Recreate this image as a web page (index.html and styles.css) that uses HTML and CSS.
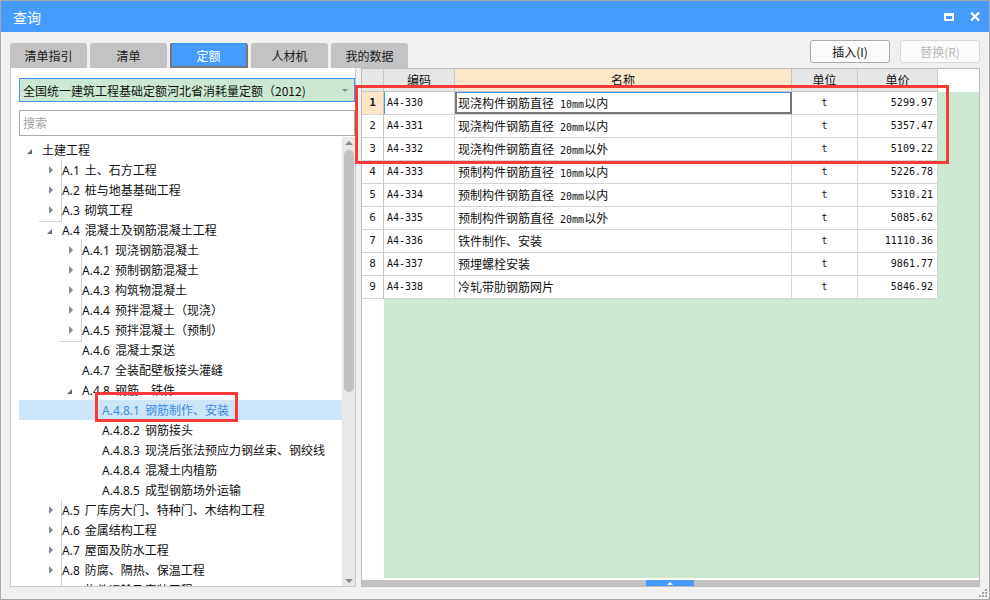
FILE: index.html
```html
<!DOCTYPE html>
<html lang="zh-CN">
<head>
<meta charset="utf-8">
<title>查询</title>
<link rel="stylesheet" href="styles.css">
</head>
<body>
<div class="window">
  <div class="titlebar">
    <span class="title">查询</span>
    <span class="tb-max"></span>
    <svg class="tb-close" width="10" height="9" viewBox="0 0 10 9"><path d="M1 0.5 L9 8.5 M9 0.5 L1 8.5" stroke="#fff" stroke-width="2.2" fill="none"/></svg>
  </div>

  <div class="toolbar">
    <div class="tabs">
      <div class="tab">清单指引</div>
      <div class="tab">清单</div>
      <div class="tab active">定额</div>
      <div class="tab">人材机</div>
      <div class="tab">我的数据</div>
    </div>
    <div class="btns">
      <div class="btn">插入(I)</div>
      <div class="btn disabled">替换(R)</div>
    </div>
  </div>

  <div class="main">
    <div class="left">
      <div class="dropdown"><span>全国统一建筑工程基础定额河北省消耗量定额（2012)</span><span class="dd-arrow"></span></div>
      <div class="search">搜索</div>
      <div class="treewrap">
        <div class="tree">
          <div class="row l0"><span class="tg e"></span>土建工程</div>
          <div class="row l1"><span class="tg c"></span>A.1 土、石方工程</div>
          <div class="row l1"><span class="tg c"></span>A.2 桩与地基基础工程</div>
          <div class="row l1"><span class="tg c"></span>A.3 砌筑工程</div>
          <div class="row l1"><span class="tg e"></span>A.4 混凝土及钢筋混凝土工程</div>
          <div class="row l2"><span class="tg c"></span>A.4.1 现浇钢筋混凝土</div>
          <div class="row l2"><span class="tg c"></span>A.4.2 预制钢筋混凝土</div>
          <div class="row l2"><span class="tg c"></span>A.4.3 构筑物混凝土</div>
          <div class="row l2"><span class="tg c"></span>A.4.4 预拌混凝土（现浇）</div>
          <div class="row l2"><span class="tg c"></span>A.4.5 预拌混凝土（预制）</div>
          <div class="row l2"><span class="tg"></span>A.4.6 混凝土泵送</div>
          <div class="row l2"><span class="tg"></span>A.4.7 全装配壁板接头灌缝</div>
          <div class="row l2"><span class="tg e"></span>A.4.8 钢筋、铁件</div>
          <div class="row l3 sel"><span class="tg"></span>A.4.8.1 钢筋制作、安装</div>
          <div class="row l3"><span class="tg"></span>A.4.8.2 钢筋接头</div>
          <div class="row l3"><span class="tg"></span>A.4.8.3 现浇后张法预应力钢丝束、钢绞线</div>
          <div class="row l3"><span class="tg"></span>A.4.8.4 混凝土内植筋</div>
          <div class="row l3"><span class="tg"></span>A.4.8.5 成型钢筋场外运输</div>
          <div class="row l1"><span class="tg c"></span>A.5 厂库房大门、特种门、木结构工程</div>
          <div class="row l1"><span class="tg c"></span>A.6 金属结构工程</div>
          <div class="row l1"><span class="tg c"></span>A.7 屋面及防水工程</div>
          <div class="row l1"><span class="tg c"></span>A.8 防腐、隔热、保温工程</div>
          <div class="row l1"><span class="tg c"></span>A.9 构件运输及安装工程</div>
        </div>
        <div class="vscroll">
          <span class="arr-up"></span>
          <span class="thumb"></span>
          <span class="vspace"></span>
          <span class="arr-down"></span>
        </div>
      </div>
    </div>

    <div class="grid">
      <div class="ghead">
        <div class="hc w-rn"><div class="ht"></div></div>
        <div class="hc w-code"><div class="ht">编码</div></div>
        <div class="hc w-name hl"><div class="ht">名称</div></div>
        <div class="hc w-unit"><div class="ht">单位</div></div>
        <div class="hc w-price"><div class="ht">单价</div></div>
        <div class="hrest"></div>
      </div>
      <div class="gbody">
        <div class="rncol">
          <div class="rn cur">1</div>
          <div class="rn">2</div>
          <div class="rn">3</div>
          <div class="rn">4</div>
          <div class="rn">5</div>
          <div class="rn">6</div>
          <div class="rn">7</div>
          <div class="rn">8</div>
          <div class="rn">9</div>
        </div>
        <div class="gmain">
          <div class="gr">
            <div class="c w-code m focus-l">A4-330</div>
            <div class="c w-name active">现浇构件钢筋直径<span class="m"> 10mm</span>以内</div>
            <div class="c w-unit m ctr">t</div>
            <div class="c w-price m num">5299.97</div>
          </div>
          <div class="gr">
            <div class="c w-code m">A4-331</div>
            <div class="c w-name">现浇构件钢筋直径<span class="m"> 20mm</span>以内</div>
            <div class="c w-unit m ctr">t</div>
            <div class="c w-price m num">5357.47</div>
          </div>
          <div class="gr">
            <div class="c w-code m">A4-332</div>
            <div class="c w-name">现浇构件钢筋直径<span class="m"> 20mm</span>以外</div>
            <div class="c w-unit m ctr">t</div>
            <div class="c w-price m num">5109.22</div>
          </div>
          <div class="gr">
            <div class="c w-code m">A4-333</div>
            <div class="c w-name">预制构件钢筋直径<span class="m"> 10mm</span>以内</div>
            <div class="c w-unit m ctr">t</div>
            <div class="c w-price m num">5226.78</div>
          </div>
          <div class="gr">
            <div class="c w-code m">A4-334</div>
            <div class="c w-name">预制构件钢筋直径<span class="m"> 20mm</span>以内</div>
            <div class="c w-unit m ctr">t</div>
            <div class="c w-price m num">5310.21</div>
          </div>
          <div class="gr">
            <div class="c w-code m">A4-335</div>
            <div class="c w-name">预制构件钢筋直径<span class="m"> 20mm</span>以外</div>
            <div class="c w-unit m ctr">t</div>
            <div class="c w-price m num">5085.62</div>
          </div>
          <div class="gr">
            <div class="c w-code m">A4-336</div>
            <div class="c w-name">铁件制作、安装</div>
            <div class="c w-unit m ctr">t</div>
            <div class="c w-price m num">11110.36</div>
          </div>
          <div class="gr">
            <div class="c w-code m">A4-337</div>
            <div class="c w-name">预埋螺栓安装</div>
            <div class="c w-unit m ctr">t</div>
            <div class="c w-price m num">9861.77</div>
          </div>
          <div class="gr">
            <div class="c w-code m">A4-338</div>
            <div class="c w-name">冷轧带肋钢筋网片</div>
            <div class="c w-unit m ctr">t</div>
            <div class="c w-price m num">5846.92</div>
          </div>
        </div>
      </div>
      <div class="hscroll-wrap">
        <div class="hscroll"><span class="hthumb"><span class="hthumb-arr"></span></span></div>
      </div>
    </div>
  </div>

  <div class="mark mark-tree"></div>
  <div class="mark mark-table"></div>
  <svg class="grip" width="10" height="10" viewBox="0 0 10 10">
    <rect x="7" y="1" width="2" height="2" fill="#a6a6a6"/>
    <rect x="4" y="4" width="2" height="2" fill="#a6a6a6"/>
    <rect x="7" y="4" width="2" height="2" fill="#a6a6a6"/>
    <rect x="1" y="7" width="2" height="2" fill="#a6a6a6"/>
    <rect x="4" y="7" width="2" height="2" fill="#a6a6a6"/>
    <rect x="7" y="7" width="2" height="2" fill="#a6a6a6"/>
  </svg>
</div>
</body>
</html>
```

FILE: styles.css
```css
html, body {
  margin: 0;
  padding: 0;
  background: #ffffff;
}

.window {
  position: relative;
  width: 990px;
  height: 600px;
  box-sizing: border-box;
  border: 1px solid #a8a8a8;
  background: #f0f0f0;
  display: flex;
  flex-direction: column;
  font-family: "Noto Sans CJK SC", "Noto Sans", sans-serif;
  color: #111;
  overflow: hidden;
}

/* title bar */
.titlebar {
  height: 31px;
  flex: none;
  background: #459bff;
  display: flex;
  align-items: center;
  padding: 0 9px 0 12px;
  color: #fff;
  font-size: 14px;
}
.title { flex: 1; }
.tb-max {
  width: 10px;
  height: 8px;
  box-sizing: border-box;
  border: 2px solid #fff;
  border-top-width: 3px;
  margin-right: 16px;
}
.tb-close { display: block; }

/* toolbar: tabs + buttons */
.toolbar {
  display: flex;
  height: 28px;
  flex: none;
  margin-top: 8px;
  padding: 0 9px;
}
.tabs {
  display: flex;
  gap: 3px;
  align-self: flex-end;
}
.tab {
  width: 77px;
  height: 25px;
  line-height: 25px;
  text-align: center;
  background: #c3c3c3;
  border-radius: 3px 3px 0 0;
  font-size: 12px;
  color: #1a1a1a;
}
.tab.active {
  background: #459bff;
  color: #fff;
}
.btns {
  margin-left: auto;
  display: flex;
  gap: 10px;
  align-self: flex-start;
}
.btn {
  width: 80px;
  height: 23px;
  box-sizing: border-box;
  border: 1px solid #acacac;
  border-radius: 3px;
  background: #fbfbfb;
  font-size: 12px;
  line-height: 21px;
  text-align: center;
  color: #111;
}
.btn.disabled {
  color: #b8b8b8;
  border-color: #dadada;
}

/* main area */
.main {
  display: flex;
  gap: 5px;
  padding: 0 9px;
  height: 519px;
  flex: none;
}

.left {
  width: 346px;
  flex: none;
  box-sizing: border-box;
  border: 1px solid #c9c9c9;
  border-top-color: #ffffff;
  background: #fff;
  padding: 9px 0 0 8px;
  display: flex;
  flex-direction: column;
}
.dropdown {
  height: 24px;
  flex: none;
  box-sizing: border-box;
  border: 1px solid #3d94ff;
  background: #cde8d2;
  display: flex;
  align-items: center;
  padding: 0 6px 0 3px;
  font-size: 12px;
  color: #111;
  white-space: nowrap;
}
.dd-arrow {
  margin-left: auto;
  width: 0;
  height: 0;
  border-top: 3px solid #8a8a8a;
  border-left: 3px solid transparent;
  border-right: 3px solid transparent;
}
.search {
  margin-top: 8px;
  height: 26px;
  flex: none;
  box-sizing: border-box;
  border: 1px solid #a9a9a9;
  font-size: 12px;
  color: #a3a3a3;
  padding-left: 3px;
  line-height: 24px;
}
.treewrap {
  margin-top: 1px;
  flex: 1;
  display: flex;
  min-height: 0;
}
.tree {
  flex: 1;
  overflow: hidden;
  padding-top: 3px;
}
.row {
  height: 20px;
  display: flex;
  align-items: center;
  font-family: "Noto Sans", "Noto Sans CJK SC", sans-serif;
  font-size: 12px;
  word-spacing: 2px;
  white-space: pre;
  color: #111;
}
.row.l1 { padding-left: 20px; }
.row.l2 { padding-left: 40px; }
.row.l3 { padding-left: 60px; }
.row.sel {
  background: #cce5f9;
  color: #3a8ee6;
}
.tg {
  width: 23px;
  height: 20px;
  flex: none;
  display: flex;
  align-items: center;
}
.tg.c::before {
  content: "";
  margin-left: 7px;
  width: 0;
  height: 0;
  border-left: 4px solid #8a8a8a;
  border-top: 4px solid transparent;
  border-bottom: 4px solid transparent;
}
.tg.e::before {
  content: "";
  margin-left: 8px;
  margin-top: 2px;
  width: 0;
  height: 0;
  border-right: 5px solid #6a6a6a;
  border-top: 5px solid transparent;
}

.vscroll {
  width: 13px;
  flex: none;
  background: #e8e8e8;
  display: flex;
  flex-direction: column;
  align-items: center;
}
.arr-up {
  margin-top: 4px;
  width: 0;
  height: 0;
  border-bottom: 4px solid #8a8a8a;
  border-left: 4px solid transparent;
  border-right: 4px solid transparent;
}
.thumb {
  margin-top: 5px;
  width: 10px;
  height: 242px;
  border-radius: 5px;
  background: #c1c1c1;
}
.vspace { flex: 1; }
.arr-down {
  margin-bottom: 3px;
  width: 0;
  height: 0;
  border-top: 4px solid #8a8a8a;
  border-left: 4px solid transparent;
  border-right: 4px solid transparent;
}

/* right grid */
.grid {
  flex: 1;
  min-width: 0;
  box-sizing: border-box;
  border: 1px solid #bcbcbc;
  background: #fff;
  display: flex;
  flex-direction: column;
}
.ghead {
  display: flex;
  height: 23px;
  flex: none;
}
.hc {
  box-sizing: border-box;
  height: 23px;
  border-right: 1px solid #c6c6c6;
  border-bottom: 1px solid #c6c6c6;
  background: #e6e6e6;
  overflow: hidden;
  font-size: 12px;
  text-align: center;
  color: #111;
  flex: none;
}
.hc.hl { background: #fde7c9; }
.ht {
  height: 17px;
  overflow: hidden;
  line-height: 22px;
  border-bottom: 1px solid #d2d2d2;
}
.hrest {
  flex: 1;
  background: #fff;
}
.w-rn { width: 22px; }
.w-code { width: 71px; }
.w-name { width: 337px; }
.w-unit { width: 66px; }
.w-price { width: 80px; }

.gbody {
  flex: 1;
  display: flex;
  min-height: 0;
}
.rncol {
  width: 22px;
  flex: none;
  background: #fff;
}
.rn {
  height: 23px;
  box-sizing: border-box;
  border-right: 1px solid #c6c6c6;
  border-bottom: 1px solid #d4d4d4;
  text-align: center;
  font-family: "DejaVu Sans Mono", monospace;
  font-size: 11px;
  line-height: 22px;
  color: #222;
}
.rn.cur {
  background: #fde5c6;
  font-weight: bold;
  color: #111;
}
.gmain {
  flex: 1;
  background: #cde8d1;
}
.gr {
  display: flex;
  width: 554px;
  height: 23px;
}
.c {
  box-sizing: border-box;
  height: 23px;
  flex: none;
  border-right: 1px solid #d4d4d4;
  border-bottom: 1px solid #d4d4d4;
  background: #fff;
  line-height: 22px;
  font-size: 12px;
  padding: 0 3px;
  white-space: pre;
  overflow: hidden;
  color: #111;
}
.m {
  font-family: "DejaVu Sans Mono", monospace;
  font-size: 10px;
}
.ctr { text-align: center; }
.num { text-align: right; padding-right: 4px; }
.focus-l { box-shadow: inset 1px 0 0 #3d94ff; }
.active {
  box-shadow: inset 2px 0 0 #777, inset -1px 0 0 #777, inset 0 -2px 0 #777, inset 0 1px 0 #3d94ff;
  border-right: 1px solid #777;
}

.hscroll-wrap {
  flex: none;
  height: 8px;
  padding-top: 2px;
  box-sizing: border-box;
  background: #fff;
}
.hscroll {
  height: 6px;
  background: #c2c2c2;
  display: flex;
}
.hthumb {
  margin-left: 284px;
  width: 48px;
  height: 6px;
  background: #459bff;
  display: flex;
  align-items: center;
  justify-content: center;
}
.hthumb-arr {
  width: 0;
  height: 0;
  border-bottom: 3px solid #fff;
  border-left: 3px solid transparent;
  border-right: 3px solid transparent;
}

/* annotation marks (overlay) */
.mark {
  position: absolute;
  box-sizing: border-box;
  border: 3px solid #f53a3a;
  pointer-events: none;
}
.mark-tree {
  left: 94px;
  top: 391px;
  width: 143px;
  height: 30px;
}
.mark-table {
  left: 354px;
  top: 84px;
  width: 594px;
  height: 79px;
}

.grip {
  position: absolute;
  right: 1px;
  bottom: 1px;
}
```
